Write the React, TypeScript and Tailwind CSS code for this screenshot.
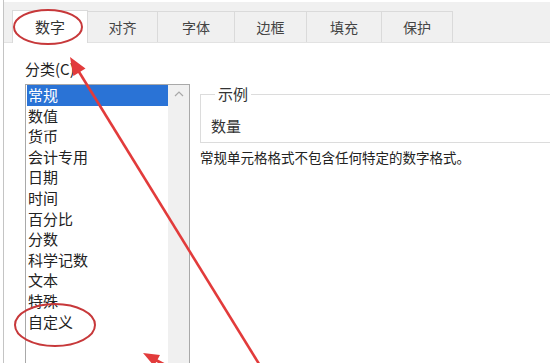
import React from "react";

const font = { fontFamily: '"Noto Sans CJK SC", "Noto Sans", sans-serif' };

const tabs = [
  { label: "数字", w: "w-[76px]", active: true },
  { label: "对齐", w: "w-[70px]" },
  { label: "字体", w: "w-[77px]" },
  { label: "边框", w: "w-[72px]" },
  { label: "填充", w: "w-[75px]" },
  { label: "保护", w: "w-[71px]" },
];

const categories = [
  "常规",
  "数值",
  "货币",
  "会计专用",
  "日期",
  "时间",
  "百分比",
  "分数",
  "科学记数",
  "文本",
  "特殊",
  "自定义",
];

function Annotations() {
  return (
    <svg
      className="absolute inset-0 pointer-events-none"
      width="550"
      height="363"
      viewBox="0 0 550 363"
    >
      {/* circle round the active tab */}
      <ellipse cx="48" cy="27" rx="34" ry="17" fill="none" stroke="#c7383a" strokeWidth="2" />
      {/* circle round 自定义 */}
      <ellipse cx="55" cy="325" rx="40" ry="21" fill="none" stroke="#c7383a" strokeWidth="2" />
      {/* long arrow */}
      <line x1="264" y1="372" x2="76" y2="67" stroke="#e23b3b" strokeWidth="2.6" />
      <polygon points="70,57 85.5,68.6 73.4,76" fill="#e23b3b" />
      {/* short arrow at the bottom */}
      <line x1="178" y1="372" x2="152" y2="358" stroke="#e23b3b" strokeWidth="3" />
      <polygon points="143,353 160,355 154,366" fill="#e23b3b" />
    </svg>
  );
}

export default function App() {
  return (
    <div
      className="relative w-[550px] h-[363px] overflow-hidden bg-white pl-[3px]"
      style={font}
    >
      <div className="h-full border-l border-[#c4c4c4] flex flex-col">
        {/* tab strip */}
        <div className="h-[43px] shrink-0 bg-[#f0f0f0] border-t-2 border-white flex items-end pl-[8px] border-b border-b-[#e2e2e2]">
          {tabs.map((t) =>
            t.active ? (
              <div
                key={t.label}
                className={`${t.w} h-[33px] -mb-px bg-white border-t border-x border-[#dadada] flex items-center justify-center text-[15px] text-[#333]`}
              >
                {t.label}
              </div>
            ) : (
              <div
                key={t.label}
                className={`${t.w} h-[31px] border-t border-r border-[#dadada] flex items-center justify-center text-[14px] text-[#444]`}
              >
                {t.label}
              </div>
            )
          )}
        </div>

        {/* body */}
        <div className="flex flex-1 pl-[21px] gap-[10px]">
          <div className="flex flex-col w-[165px] shrink-0">
            <div className="mt-[16px] mb-[5px] h-[20px] leading-[20px] text-[15px] text-[#222]">
              分类(C)
            </div>
            <div className="h-[300px] border border-[#a9a9a9] flex">
              <div className="flex-1 flex flex-col pt-[0px] pl-[1px]">
                {categories.map((c, i) => (
                  <div
                    key={c}
                    className={`h-[20.6px] leading-[20.6px] text-[15px] pl-[1px] ${
                      i === 0 ? "bg-[#2a73d6] text-white" : "text-[#222]"
                    }`}
                  >
                    {c}
                  </div>
                ))}
              </div>
              <div className="w-[21px] bg-[#f0f0f0] flex justify-center pt-[6px]">
                <svg width="10" height="6" viewBox="0 0 10 6">
                  <path d="M1 5 L5 1 L9 5" fill="none" stroke="#a8a8a8" strokeWidth="1.2" />
                </svg>
              </div>
            </div>
          </div>

          <div className="flex flex-col w-[352px] shrink-0">
            <fieldset className="mt-[41px] border border-[#dcdcdc] pl-[10px] pt-[12px] pb-[6px]">
              <legend className="ml-[4px] px-[3px] text-[15px] leading-[20px] text-[#333]">
                示例
              </legend>
              <div className="h-[20px] leading-[20px] text-[15px] text-[#333]">数量</div>
            </fieldset>
            <div className="mt-[4px] h-[20px] leading-[20px] text-[13.5px] text-[#222]">
              常规单元格格式不包含任何特定的数字格式。
            </div>
          </div>
        </div>
      </div>
      <Annotations />
    </div>
  );
}
